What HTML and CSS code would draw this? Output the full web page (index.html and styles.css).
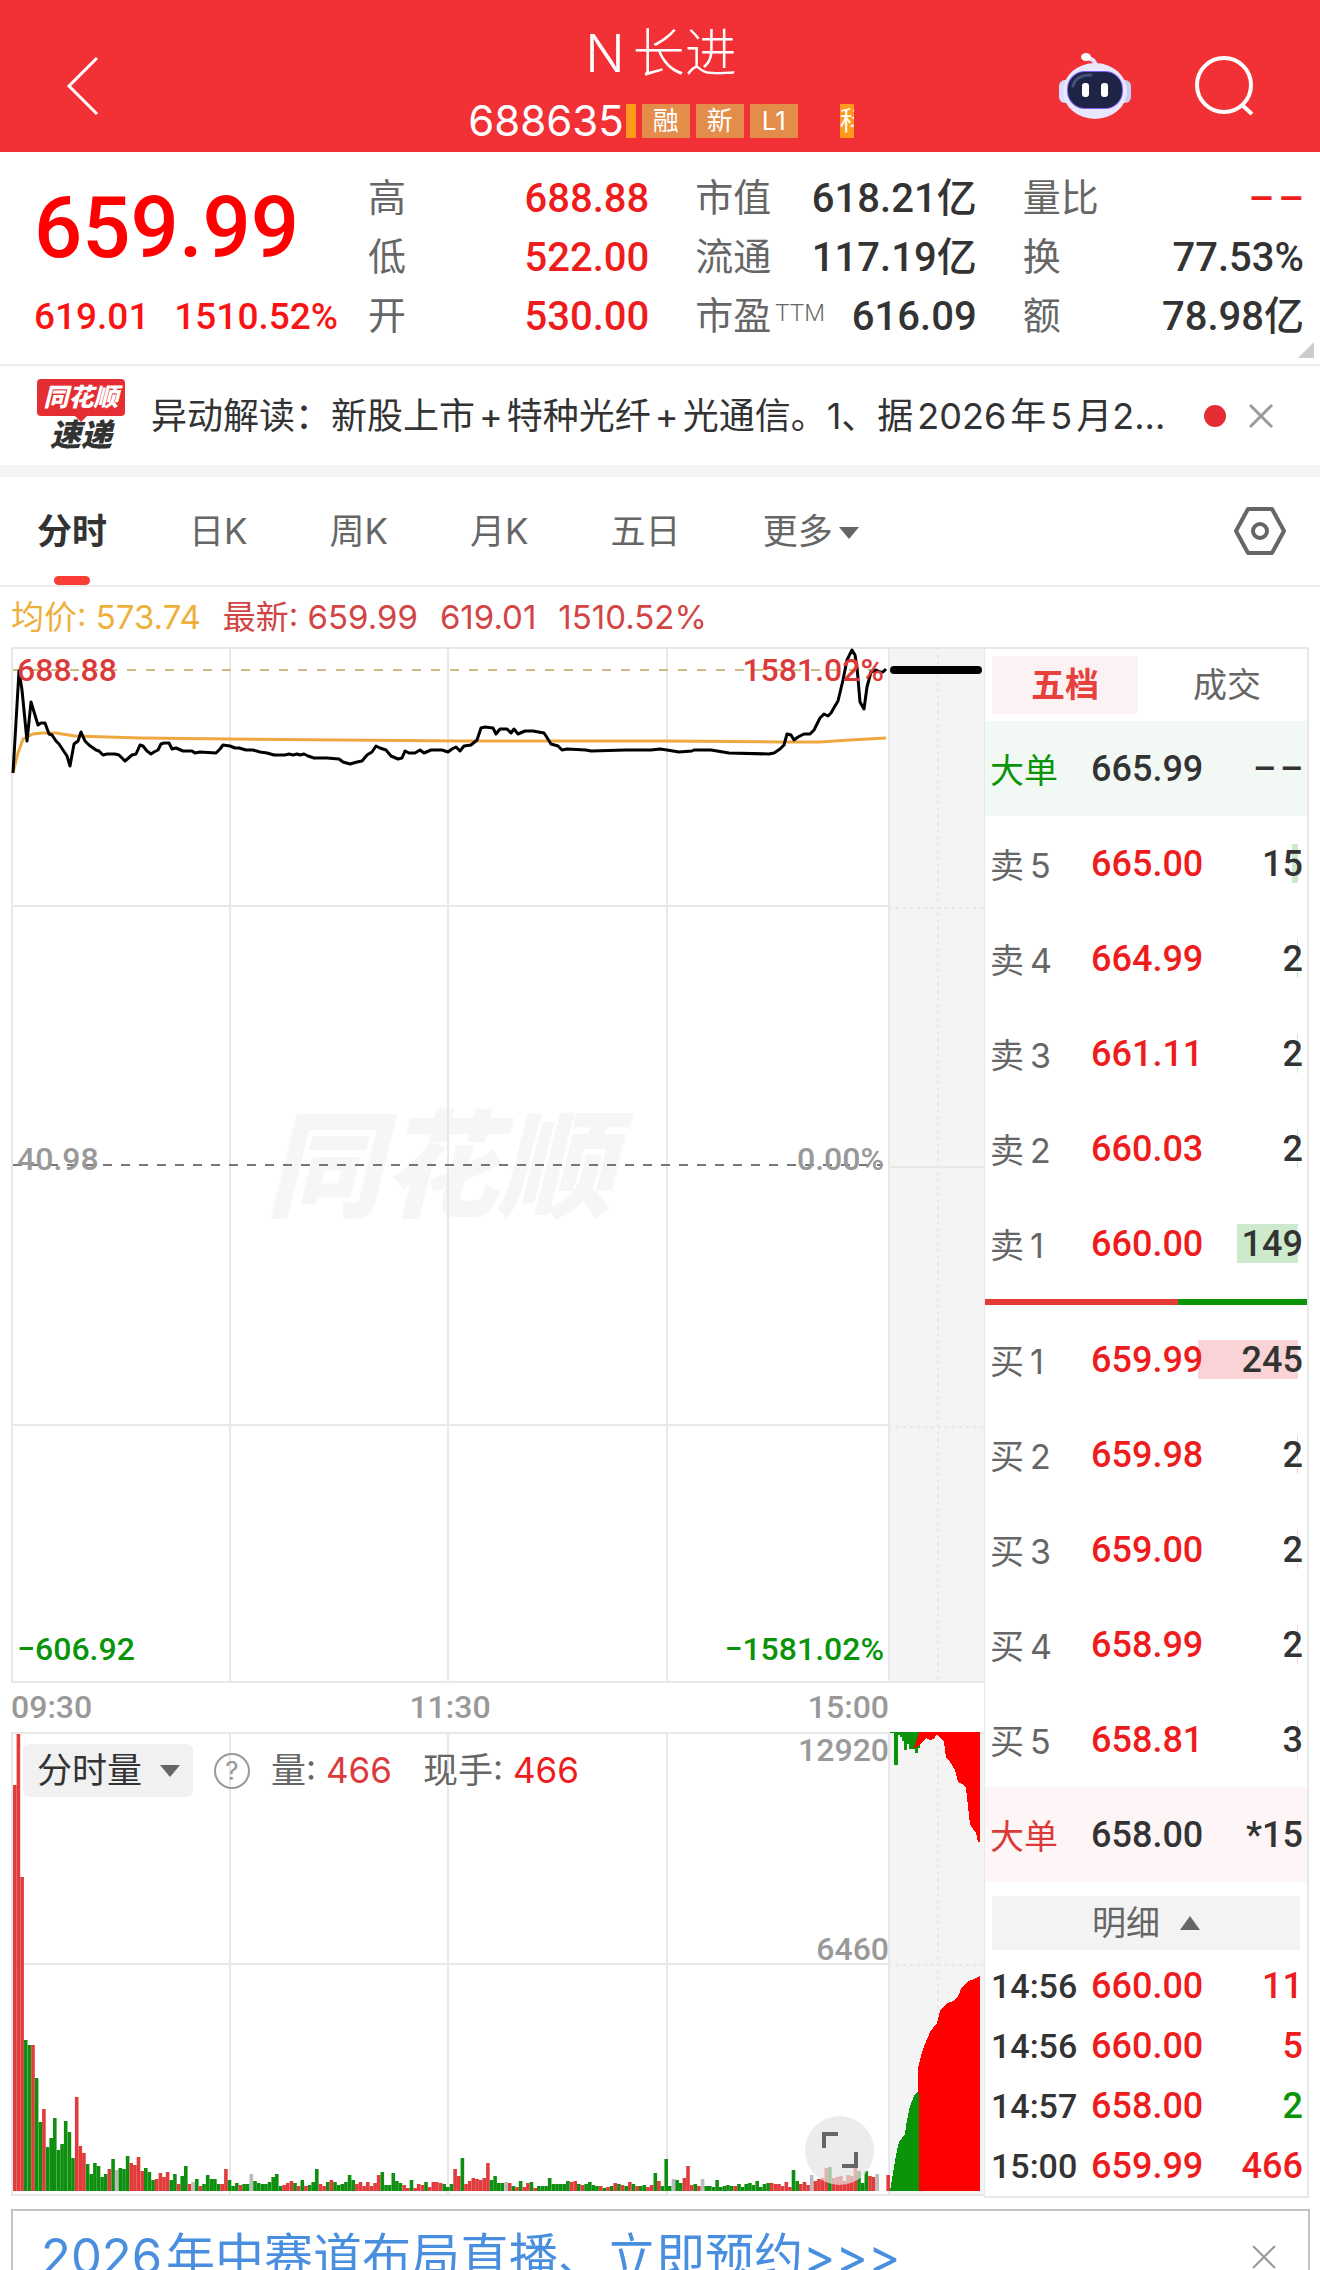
FILE: index.html
```html
<!DOCTYPE html>
<html lang="zh-CN">
<head>
    <meta charset="UTF-8">
    <meta name="viewport" content="width=device-width, initial-scale=1.0">
    <title>N长进 688635</title>
    <link rel="stylesheet" href="styles.css">
</head>
<body>
    <header class="topbar">
        <button class="icon-btn back" aria-label="返回">
            <svg width="34" height="62" viewBox="0 0 34 62"><path d="M31 3 3 31l28 28" fill="none" stroke="#fff" stroke-width="3"/></svg>
        </button>
        <div class="topbar-center">
            <h1>N<span class="gap">长进</span></h1>
            <div class="code-row">
                <span class="code">688635</span>
                <span class="tag tag-edge"></span>
                <span class="tag">融</span>
                <span class="tag">新</span>
                <span class="tag">L1</span>
                <span class="tag tag-cut">科</span>
            </div>
        </div>
        <div class="topbar-actions">
            <button class="icon-btn robot" aria-label="智能助手">
                <svg width="74" height="68" viewBox="0 0 74 68">
                    <path d="M38 17c0-8-3-10-9-11" fill="none" stroke="#e6e3fb" stroke-width="4" stroke-linecap="round"/>
                    <ellipse cx="28" cy="5" rx="5" ry="4" fill="#fff"/>
                    <rect x="1" y="28" width="12" height="23" rx="6" fill="#d8dcfa"/>
                    <rect x="61" y="28" width="12" height="23" rx="6" fill="#c9cdf5"/>
                    <ellipse cx="37" cy="39" rx="32" ry="28" fill="#e9e7fd"/>
                    <rect x="9" y="19" width="56" height="38" rx="18" fill="#7a5cf0"/>
                    <rect x="10" y="20" width="54" height="36" rx="17" fill="#1d2446"/>
                    <path d="M15 34c2-8 8-11 18-11" fill="none" stroke="#46507a" stroke-width="3" stroke-linecap="round"/>
                    <rect x="24" y="31" width="7" height="14" rx="3" fill="#fff"/>
                    <rect x="43" y="31" width="7" height="14" rx="3" fill="#fff"/>
                </svg>
            </button>
            <button class="icon-btn" aria-label="搜索">
                <svg width="62" height="62" viewBox="0 0 62 62" fill="none" stroke="#fff" stroke-width="4"><circle cx="30" cy="30" r="27"/><path d="m48 50 10 9"/></svg>
            </button>
        </div>
    </header>

    <section class="quote">
        <div class="price-block">
            <div class="price">659.99</div>
            <div class="change"><span>619.01</span><span>1510.52%</span></div>
        </div>
        <div class="stats">
            <dl>
                <div><dt>高</dt><dd class="red">688.88</dd></div>
                <div><dt>低</dt><dd class="red">522.00</dd></div>
                <div><dt>开</dt><dd class="red">530.00</dd></div>
            </dl>
            <dl>
                <div><dt>市值</dt><dd>618.21亿</dd></div>
                <div><dt>流通</dt><dd>117.19亿</dd></div>
                <div><dt>市盈<small>TTM</small></dt><dd>616.09</dd></div>
            </dl>
            <dl>
                <div><dt>量比</dt><dd class="red">–&#8202;–</dd></div>
                <div><dt>换</dt><dd>77.53%</dd></div>
                <div><dt>额</dt><dd>78.98亿</dd></div>
            </dl>
        </div>
        <span class="corner"></span>
    </section>

    <section class="news">
        <div class="news-logo">
            <span class="logo-top">同花顺</span>
            <span class="logo-bottom">速递</span>
        </div>
        <a class="news-text" href="#">异动解读：新股上市<span class="gap">+</span><span class="gap">特种光纤</span><span class="gap">+</span><span class="gap">光通信。</span>1、据<span class="gap">2026</span><span class="gap">年</span><span class="gap">5</span><span class="gap">月</span>2...</a>
        <span class="dot"></span>
        <button class="icon-btn" aria-label="关闭">
            <svg width="26" height="26" viewBox="0 0 26 26"><path d="m2 2 22 22M24 2 2 24" stroke="#999" stroke-width="3"/></svg>
        </button>
    </section>

    <nav class="tabs">
        <button class="tab active">分时</button>
        <button class="tab">日K</button>
        <button class="tab">周K</button>
        <button class="tab">月K</button>
        <button class="tab">五日</button>
        <button class="tab">更多<span class="caret"></span></button>
        <button class="icon-btn settings" aria-label="设置">
            <svg width="52" height="48" viewBox="0 0 52 48" fill="none" stroke="#666" stroke-width="4" stroke-linejoin="round"><path d="M14 2h24l12 22-12 22H14L2 24z"/><circle cx="26" cy="24" r="7"/></svg>
        </button>
    </nav>

    <div class="legend">
        <span class="avg">均价: 573.74</span>
        <span>最新: 659.99</span>
        <span>619.01</span>
        <span>1510.52%</span>
    </div>

    <main class="board">
        <section class="charts">
            <div class="price-chart">
                <span class="watermark">同花顺</span>
                <svg viewBox="11 647 973 1036" preserveAspectRatio="none">
                    <rect x="889" y="647" width="95" height="1036" fill="#f4f4f4"/>
                    <g stroke="#e8e8e8" stroke-width="2" fill="none">
                        <path d="M11 648h973M11 1682h973M12 647v1036M889 647v1036"/>
                        <path d="M230 647v1036M448 647v1036M667 647v1036M11 906h878M11 1425h878M889 1167h95"/>
                        <path d="M938 647v1036M889 908h95M889 1427h95" stroke-dasharray="3 4"/>
                    </g>
                    <path d="M13 670h870" stroke="#cdbb84" stroke-width="2" stroke-dasharray="9 10"/>
                    <path d="M13 1165h870" stroke="#777" stroke-width="2" stroke-dasharray="9 9"/>
                    <polyline fill="none" stroke="#efa83f" stroke-width="3" points="13,773 18,753 23,739 33,734 42,733 56,733 75,736 140,738 230,739 340,740 460,741 667,741 780,742 820,742 850,740 886,738"/>
                    <polyline fill="none" stroke="#000" stroke-width="3" stroke-linejoin="round" points="13,773 19,671 22,690 27,741 31,702 38,725 41,723 45,723 49,734 52,735 56,741 59,744 63,750 67,756 70,766 74,744 78,741 81,732 85,741 89,745 96,750 99,751 103,755 107,754 115,754 119,755 125,761 132,755 136,754 140,745 143,746 147,751 151,754 154,752 158,750 161,744 164,743 169,743 172,749 176,748 183,751 192,751 195,753 200,752 216,753 220,749 223,745 230,746 235,748 239,748 246,750 253,750 260,752 267,753 274,755 285,755 289,754 293,755 297,754 300,755 304,754 308,756 314,758 327,758 339,759 343,762 350,764 357,762 362,761 367,755 372,752 376,746 380,748 386,750 391,756 398,759 402,758 405,751 409,753 415,753 420,750 424,753 431,750 442,750 448,752 452,749 456,747 460,751 464,746 471,745 477,740 481,728 485,727 493,728 496,734 500,729 507,729 511,733 514,729 518,734 525,731 533,731 544,733 546,736 551,744 558,746 562,750 567,749 586,750 591,751 626,750 651,750 660,749 667,750 679,752 692,751 694,750 711,750 729,753 769,754 774,753 780,749 784,745 787,734 791,735 794,740 798,737 804,734 810,734 814,730 820,718 824,714 828,716 831,713 835,706 838,701 843,680 847,660 852,650 855,655 857,667 860,702 864,709 867,687 871,672 876,670 880,672 883,672 886,669"/>
                    <path d="M894 670h84" stroke="#000" stroke-width="8" stroke-linecap="round"/>
                </svg>
                <span class="mark top-left red">688.88</span>
                <span class="mark top-right red">1581.02%</span>
                <span class="mark mid-left">40.98</span>
                <span class="mark mid-right">0.00%</span>
                <span class="mark bottom-left green">−606.92</span>
                <span class="mark bottom-right green">−1581.02%</span>
            </div>
            <div class="time-axis"><span>09:30</span><span>11:30</span><span>15:00</span></div>
            <div class="volume-chart">
                <svg viewBox="11 1732 973 464" preserveAspectRatio="none">
                    <rect x="889" y="1732" width="95" height="464" fill="#f4f4f4"/>
                    <g stroke="#e8e8e8" stroke-width="2" fill="none">
                        <path d="M11 1733h973M11 2195h973M12 1732v464M889 1732v464M230 1732v464M448 1732v464M667 1732v464M11 1964h878"/>
                        <path d="M938 1732v464M889 1965h95" stroke-dasharray="3 4"/>
                    </g>
                    <g id="bars"></g>
                    <g shape-rendering="crispEdges">
                        <path fill="#099409" d="M890 1732h30v16h-2v5h-3v-4h-6v-5h-2v6h-3v-9h-2v-4h-2v-2h-2v30h-4v-32h-4z"/>
                        <path fill="#f00" d="M919 1732h61v110h-2l-2-9-3-4-3-5-2-18-2-18-4-4-4-2-3-12-6-10-3-2-2-16-4-4-3-4-3 5-4 1-4-2-4 4-5 5-3 1z"/>
                        <path fill="#099409" d="M890 2191l3-18 3-18 3-13 3-4 3-4 2-14 3-14 4-10 3-4h3v99z"/>
                        <path fill="#f00" d="M918 2094v-26l3-12 4-12 5-12 7-9 3-12 6-7 7-3 5-5 4-9 5-5 7-3 6-3v215h-61v-97z"/>
                    </g>
                </svg>
                <div class="volume-head">
                    <label class="select-wrap">
                        <select aria-label="副图指标"><option>分时量</option></select>
                        <span class="caret"></span>
                    </label>
                    <button class="help" aria-label="说明">?</button>
                    <span>量: <b class="red">466</b></span>
                    <span>现手: <b class="bright">466</b></span>
                </div>
                <span class="mark vol-max">12920</span>
                <span class="mark vol-mid">6460</span>
                <button class="expand" aria-label="全屏">
                    <svg width="36" height="42" viewBox="0 0 36 42" fill="none" stroke="#666" stroke-width="4"><path d="M2 18V4h14M34 22v14H20"/></svg>
                </button>
            </div>
        </section>

        <aside class="panel">
            <div class="panel-tabs">
                <button class="panel-tab active">五档</button>
                <button class="panel-tab">成交</button>
            </div>
            <table class="orders">
                <tbody id="sell">
                    <tr class="big sell-big"><th>大单</th><td>665.99</td><td>–&#8202;–</td></tr>
                </tbody>
            </table>
            <div class="ratio"><span class="ratio-buy"></span><span class="ratio-sell"></span></div>
            <table class="orders">
                <tbody id="buy"></tbody>
                <tbody>
                    <tr class="big buy-big"><th>大单</th><td>658.00</td><td>*15</td></tr>
                </tbody>
            </table>
            <button class="detail-btn">明细<span class="caret up"></span></button>
            <table class="trades">
                <tr><td>14:56</td><td>660.00</td><td>11</td></tr>
                <tr><td>14:56</td><td>660.00</td><td>5</td></tr>
                <tr><td>14:57</td><td>658.00</td><td class="green">2</td></tr>
                <tr><td>15:00</td><td>659.99</td><td>466</td></tr>
            </table>
        </aside>
    </main>

    <div class="promo">
        <a href="#">2026<span class="gap">年中赛道布局直播、立即预约</span>&gt;&gt;&gt;</a>
        <button class="icon-btn" aria-label="关闭">
            <svg width="26" height="26" viewBox="0 0 26 26"><path d="m2 2 22 22M24 2 2 24" stroke="#999" stroke-width="2"/></svg>
        </button>
    </div>

    <script src="app.js"></script>
</body>
</html>
```
FILE: styles.css
```css
* {
    box-sizing: border-box;
}
html {
    overflow: hidden;
}
body {
    margin: 0;
    height: 100vh;
    overflow: hidden;
    background: #fff;
    color: #333;
    font-family: Inter, "Noto Sans CJK SC", sans-serif;
}
button, select {
    font: inherit;
    color: inherit;
    border: 0;
    padding: 0;
    background: none;
    cursor: pointer;
}
a {
    text-decoration: none;
}
svg {
    display: block;
}
.icon-btn {
    display: flex;
}
.red {
    color: #dc3a3a;
}
.bright {
    color: #ee1c1c;
}
.green {
    color: #0a940a;
}
/* space between latin and chinese text */
.gap {
    margin-left: 4px;
}
.caret {
    display: inline-block;
    border: 10px solid transparent;
    border-top: 12px solid #666;
    border-bottom: 0;
}
.caret.up {
    border-top: 0;
    border-bottom: 14px solid #666;
}

/* top bar */
.topbar {
    display: grid;
    grid-template-columns: 1fr auto 1fr;
    align-items: center;
    padding: 22px 64px 14px 66px;
    background: #f23136;
    color: #fff;
}
.back, .topbar-actions {
    padding-top: 12px;
}
.topbar-center {
    text-align: center;
}
h1 {
    margin: 0 0 18px;
    font-size: 52px;
    line-height: 64px;
    font-weight: 300;
}
h1 .gap {
    margin-left: 8px;
}
.code-row {
    display: flex;
    gap: 6px;
    height: 34px;
}
.code {
    font-size: 42px;
    line-height: 34px;
}
.tag {
    width: 48px;
    background: #e48d4a;
    font-size: 26px;
    line-height: 34px;
    text-align: center;
    overflow: hidden;
}
.tag-edge {
    width: 10px;
    margin-left: -4px;
    background: #ff9a1c;
}
.tag-cut {
    width: 14px;
    margin-left: 36px;
    background: #ff9a1c;
}
.topbar-actions {
    display: flex;
    justify-content: flex-end;
    align-items: center;
    gap: 62px;
}

/* quote */
.quote {
    position: relative;
    display: flex;
    padding: 17px 16px 18px 34px;
    border-bottom: 2px solid #eee;
    font-family: Roboto, "Noto Sans CJK SC", sans-serif;
}
.price-block {
    width: 304px;
    margin-right: 30px;
    color: #f81414;
    font-weight: 500;
}
.price {
    font-size: 85px;
    line-height: 118px;
    color: #f00;
}
.change {
    display: flex;
    justify-content: space-between;
    font-size: 37px;
    line-height: 59px;
}
.stats {
    flex: 1;
    display: grid;
    grid-template-columns: repeat(3, 1fr);
    gap: 46px;
}
.stats dl {
    margin: 0;
}
.stats dl div {
    display: flex;
    justify-content: space-between;
    line-height: 59px;
}
.stats dt {
    font-size: 38px;
    color: #666;
    white-space: nowrap;
}
.stats small {
    font-size: 24px;
    line-height: 24px;
    vertical-align: 8px;
    margin-left: 4px;
    font-weight: 300;
}
.stats dd {
    margin: 0;
    font-size: 40px;
    font-weight: 500;
}
.stats dd.red {
    color: #ee1c1c;
}
.corner {
    position: absolute;
    right: 6px;
    bottom: 6px;
    border: 8px solid #ccc;
    border-top-color: transparent;
    border-left-color: transparent;
}

/* news */
.news {
    display: flex;
    align-items: center;
    height: 111px;
    padding: 0 46px 0 37px;
    border-bottom: 12px solid #f4f4f4;
}
.news-logo {
    width: 88px;
    margin-right: 26px;
    text-align: center;
    font-weight: 900;
    font-style: italic;
}
.logo-top {
    position: relative;
    display: block;
    border-radius: 4px;
    background: #e52e33;
    color: #fff;
    font-size: 25px;
    line-height: 37px;
}
.logo-top::after {
    content: "";
    position: absolute;
    left: 38px;
    top: 37px;
    border: 6px solid transparent;
    border-top-color: #e52e33;
    border-bottom: 0;
}
.logo-bottom {
    display: block;
    font-size: 31px;
    line-height: 37px;
}
.news-text {
    flex: 1;
    color: #333;
    font-size: 36px;
    line-height: 48px;
    white-space: nowrap;
}
.dot {
    width: 22px;
    height: 22px;
    margin-right: 22px;
    border-radius: 50%;
    background: #e52e33;
}

/* period tabs */
.tabs {
    display: flex;
    align-items: center;
    gap: 82px;
    height: 110px;
    padding: 0 34px 0 37px;
    border-bottom: 2px solid #eee;
    color: #666;
    font-size: 35px;
}
.tab {
    position: relative;
    line-height: 108px;
}
.tab .caret {
    margin-left: 6px;
    vertical-align: 5px;
}
.tab.active {
    color: #333;
    font-weight: bold;
}
.tab.active::after {
    content: "";
    position: absolute;
    left: 17px;
    right: 17px;
    bottom: 0;
    height: 9px;
    border-radius: 5px;
    background: #fa3c37;
}
.settings {
    margin-left: auto;
}
.legend {
    display: flex;
    gap: 22px;
    padding-left: 11px;
    color: #d24545;
    font-size: 33px;
    line-height: 60px;
}
.legend .avg {
    color: #eeb03c;
}

/* charts */
.board {
    display: flex;
    margin: 0 11px;
}
.charts {
    flex: 1;
    min-width: 0;
}
.price-chart, .volume-chart {
    position: relative;
}
.price-chart svg {
    position: relative;
    width: 100%;
    height: 1036px;
}
.volume-chart > svg {
    width: 100%;
    height: 464px;
}
.watermark {
    position: absolute;
    left: 0;
    right: 116px;
    top: 434px;
    text-align: center;
    font-size: 116px;
    line-height: 170px;
    font-weight: 900;
    font-style: italic;
    color: #f6f6f6;
}
.mark {
    position: absolute;
    font: 500 32px/36px Roboto, sans-serif;
    color: #999;
}
.mark.red {
    color: #dc3a3a;
}
.mark.green {
    color: #0a940a;
}
.top-left, .mid-left, .bottom-left {
    left: 6px;
}
.top-right, .mid-right, .bottom-right {
    right: 100px;
}
.top-left, .top-right {
    top: 5px;
}
.mid-left, .mid-right {
    top: 494px;
}
.bottom-left, .bottom-right {
    bottom: 16px;
}
.time-axis {
    display: flex;
    justify-content: space-between;
    padding-right: 95px;
    font: 500 32px/49px Roboto, sans-serif;
    color: #999;
}
.volume-head {
    position: absolute;
    left: 12px;
    top: 12px;
    display: flex;
    align-items: center;
    gap: 21px;
    color: #666;
    font-size: 35px;
    line-height: 53px;
}
.volume-head b {
    font-weight: 400;
}
.volume-head span + span {
    margin-left: 10px;
}
.select-wrap {
    position: relative;
}
.select-wrap select {
    width: 170px;
    height: 53px;
    padding-left: 14px;
    border-radius: 6px;
    background: #f1f1f1;
    color: #333;
    appearance: none;
}
.select-wrap .caret {
    position: absolute;
    right: 13px;
    top: 21px;
    margin: 0;
}
.help {
    width: 36px;
    height: 36px;
    border: 2px solid #999;
    border-radius: 50%;
    color: #999;
    font-size: 26px;
    line-height: 30px;
}
.vol-max {
    right: 95px;
    top: 0;
}
.vol-mid {
    right: 95px;
    top: 199px;
}
.expand {
    position: absolute;
    right: 110px;
    bottom: 11px;
    display: flex;
    align-items: center;
    justify-content: center;
    width: 69px;
    height: 69px;
    border-radius: 50%;
    background: rgba(228, 228, 228, 0.7);
}

/* order book */
.panel {
    width: 325px;
    border: 2px solid #e8e8e8;
    border-left-width: 1px;
    font-size: 34px;
}
.panel-tabs {
    display: flex;
    gap: 16px;
    padding: 7px;
}
.panel-tab {
    flex: 1;
    line-height: 58px;
    border-radius: 4px;
    color: #666;
}
.panel-tab.active {
    background: #fdf2f3;
    color: #e8403c;
    font-weight: bold;
}
table {
    width: 100%;
    border-collapse: collapse;
    table-layout: fixed;
    font-weight: 500;
}
th, td {
    padding: 0;
    text-align: left;
}
.orders tr {
    height: 95px;
}
.orders th {
    width: 106px;
    padding-left: 5px;
    color: #666;
    font-weight: 400;
}
.orders .gap {
    margin-left: 6px;
}
td {
    font-family: Roboto, sans-serif;
    font-size: 36px;
    color: #ee1c1c;
}
td:last-child {
    padding-right: 4px;
    text-align: right;
}
.orders td:nth-child(2) {
    width: 114px;
}
.orders td:last-child, .orders .big td {
    color: #333;
}
.sell-big {
    background: #f2f9f5;
}
.orders .sell-big th {
    color: #0a940a;
}
.buy-big {
    background: #fdf5f6;
}
.orders .buy-big th {
    color: #dc3a3a;
}
.qty {
    position: relative;
}
.qty .depth {
    position: absolute;
    right: 9px;
    top: 28px;
    height: 39px;
    z-index: -1;
}
.depth.sell {
    background: #cdeacd;
}
.depth.buy {
    background: #f9d3d5;
}
.ratio {
    display: flex;
    height: 6px;
    margin: 8px 0 7px;
}
.ratio-buy {
    flex: 60;
    background: #e53a37;
}
.ratio-sell {
    flex: 40;
    background: #099409;
}
.detail-btn {
    display: block;
    width: calc(100% - 14px);
    margin: 14px 7px 6px;
    background: #f3f3f3;
    color: #666;
    line-height: 54px;
}
.detail-btn .caret {
    margin-left: 20px;
    vertical-align: 5px;
}
.trades tr {
    height: 60px;
}
.trades td:first-child {
    width: 106px;
    padding-left: 6px;
    font-size: 34px;
    color: #333;
}
.trades td.green {
    color: #0a940a;
}

/* promo */
.promo {
    display: flex;
    align-items: center;
    justify-content: space-between;
    margin: 11px 10px 0 11px;
    padding: 0 31px 0 28px;
    border: 2px solid #c4c4c4;
    font-size: 49px;
    line-height: 92px;
}
.promo a {
    color: #4a8fdf;
}
```
FILE: app.js
```javascript
// minute volumes: r = up, g = down, n = flat
const VOLUMES = `r406 r457 r314 g151 g146 r146 g113 g69 r82 g44 g53 g73 g41 g47 g70 g59 g33 r94 r45 r38
g27 g17 g28 g25 g14 g17 r22 g32 n21 g23 g22 g35 r28 r26 r34 r20 g23 g19 g11 r12
r18 r14 r19 g11 g17 r7 g15 g25 r7 n9 g12 r5 g7 g16 g12 g12 g7 r7 r22 g11
g5 g8 r6 g7 g7 n17 g10 g8 g7 g7 g9 g14 g17 g5 r6 r8 r10 g8 r5 g11
r5 g6 g9 g22 r7 r5 g9 r11 g9 g6 g7 g9 g16 g11 r7 r9 r5 r9 r5 r8
r16 g19 g6 g6 g18 g10 g8 r6 r3 g11 r3 r7 r6 g9 r4 r9 r9 r8 g7 g4
g7 r22 r15 g33 r7 r10 r13 r12 r11 r13 r28 g11 g15 g8 g8 n9 r8 g5 r4 g10
r4 r8 g9 r3 g5 g5 g5 g13 g7 g7 g7 g7 g10 r9 r10 g7 r6 g7 g9 g6
g5 r5 g3 r4 g5 r8 g7 r6 g5 r9 g7 r5 g5 g6 r4 r6 g18
r10 g5 g32 g5 n12 g11 g8 r13 r25 r6 g7 r5 n12 g5 g5 g4 g11 g4 g5 g6
g5 r5 g7 g4 g7 g8 g6 g10 g4 g7 g8 r8 r7 r7 r5 r9 r4 g21 g10
r7 r9 r6 n16 r10 r12 r13 r23 g24 r13 r14 r15 r10 r16 r15 r23 g20 g8 g20 r15
r14 n17 r0 r0 r16`.split(/\s+/);
const COLORS = { r: "#e23b3b", g: "#0f8f0f", n: "#bbb" };
const BASE = 2191;
const STEP = 877 / VOLUMES.length;

const SELL = [[5, "665.00", 15], [4, "664.99", 2], [3, "661.11", 2], [2, "660.03", 2], [1, "660.00", 149]];
const BUY = [[1, "659.99", 245], [2, "659.98", 2], [3, "659.00", 2], [4, "658.99", 2], [5, "658.81", 3]];

function drawBars() {
    document.getElementById("bars").innerHTML = VOLUMES.map((v, i) => {
        const h = Number(v.slice(1));
        return `<rect x="${(13 + i * STEP).toFixed(1)}" y="${BASE - h}" width="3.6" height="${h}" fill="${COLORS[v[0]]}"/>`;
    }).join("");
}

function fillOrders(id, label, rows) {
    const html = rows.map(([level, price, qty]) => {
        const width = Math.max(1, Math.round(qty * 0.41));
        return `<tr><th>${label}<span class="gap">${level}</span></th><td>${price}</td><td class="qty"><span class="depth ${id}" style="width:${width}px"></span>${qty}</td></tr>`;
    }).join("");
    document.getElementById(id).insertAdjacentHTML("beforeend", html);
}

drawBars();
fillOrders("sell", "卖", SELL);
fillOrders("buy", "买", BUY);
```
